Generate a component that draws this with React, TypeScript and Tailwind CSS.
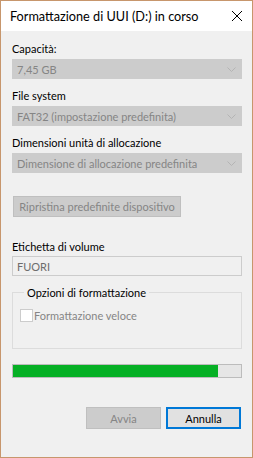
import React from "react";

const font = { fontFamily: 'Lato, "Noto Sans", sans-serif' };

function Chevron() {
  return (
    <svg width="9" height="5" viewBox="0 0 9 5" className="shrink-0">
      <polyline points="0.5,0.5 4.5,4.5 8.5,0.5" fill="none" stroke="#b4b4b4" strokeWidth="1" />
    </svg>
  );
}

function ComboBox({ value }: { value: string }) {
  return (
    <div className="mt-[3px] h-[20px] w-[230px] bg-[#cccccc] border border-[#cccccc] flex items-center justify-between pl-[4px] pr-[5px] text-[#858585] whitespace-nowrap">
      <span>{value}</span>
      <Chevron />
    </div>
  );
}

export default function App() {
  return (
    <div
      className="w-[253px] h-[458px] border border-[#c7966c] bg-[#f0f0f0] flex flex-col text-black whitespace-nowrap"
      style={font}
    >
      <div className="h-[30px] bg-white flex items-center justify-between pl-[9px] pr-[10px]">
        <span className="text-[12.7px] leading-[16px]">Formattazione di UUI (D:) in corso</span>
        <svg width="10" height="10" viewBox="0 0 10 10">
          <line x1="0" y1="0" x2="10" y2="10" stroke="#000" strokeWidth="1" />
          <line x1="10" y1="0" x2="0" y2="10" stroke="#000" strokeWidth="1" />
        </svg>
      </div>

      <div className="flex flex-col px-[11px] pt-[10px] text-[11px] leading-[15px]">
        <div>Capacità:</div>
        <ComboBox value="7,45 GB" />

        <div className="mt-[9px]">File system</div>
        <ComboBox value="FAT32 (impostazione predefinita)" />

        <div className="mt-[9px]">Dimensioni unità di allocazione</div>
        <ComboBox value="Dimensione di allocazione predefinita" />

        <button className="mt-[23px] ml-[1px] h-[21px] w-[168px] bg-[#cccccc] border border-[#bfbfbf] text-[#858585] text-[11px] text-center">
          Ripristina predefinite dispositivo
        </button>

        <div className="mt-[22px]">Etichetta di volume</div>
        <div className="mt-[2px] h-[20px] w-[230px] border border-[#cccccc] bg-[#f0f0f0] flex items-center pl-[4px] text-[#6d6d6d]">
          FUORI
        </div>

        <fieldset className="mt-[9px] w-[230px] h-[64px] border border-[#dcdcdc] pl-[7px]">
          <legend className="ml-[4px] px-[3px] text-black">Opzioni di formattazione</legend>
          <div className="mt-[8px] flex items-center gap-[1px] text-[#858585]">
            <div className="w-[13px] h-[13px] border border-[#cccccc] bg-white" />
            <span>Formattazione veloce</span>
          </div>
        </fieldset>

        <div className="mt-[15px] h-[14px] w-[230px] border border-[#bcbcbc] bg-[#e6e6e6]">
          <div className="h-full w-[205px] bg-[#06b025]" />
        </div>

        <div className="mt-[29px] flex justify-end gap-[5px]">
          <button className="h-[22px] w-[75px] bg-[#cccccc] border border-[#bfbfbf] text-[#858585] text-[11px]">
            Avvia
          </button>
          <button className="h-[22px] w-[75px] bg-[#e1e1e1] border-2 border-[#0078d7] text-black text-[11px]">
            Annulla
          </button>
        </div>
      </div>
    </div>
  );
}
